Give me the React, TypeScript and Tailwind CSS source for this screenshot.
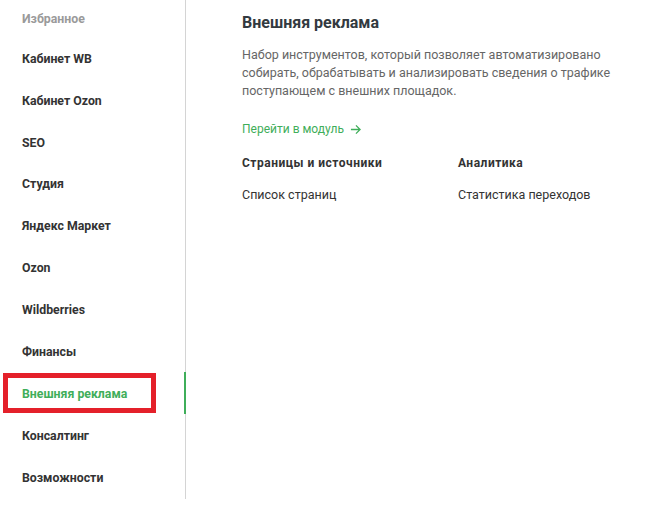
import React from "react";

const items = [
  "Кабинет WB",
  "Кабинет Ozon",
  "SEO",
  "Студия",
  "Яндекс Маркет",
  "Ozon",
  "Wildberries",
  "Финансы",
  "Внешняя реклама",
  "Консалтинг",
  "Возможности",
];

export default function App() {
  return (
    <div
      className="flex w-[655px] h-[514px] bg-white"
      style={{ fontFamily: "Roboto, 'Noto Sans', sans-serif" }}
    >
      <div className="w-[186px] shrink-0">
        <div className="border-r border-[#d4d4d4] flex flex-col">
          <div className="h-[38px] shrink-0 flex items-center pl-[22px] text-[12.3px] font-bold text-[#9a9a9a]">
            Избранное
          </div>
          {items.map((it) => {
            const active = it === "Внешняя реклама";
            return (
              <div
                key={it}
                className={
                  active
                    ? "relative h-[41.9px] shrink-0 flex items-center pl-[22px] text-[12.3px] font-bold text-[#3fae5a]"
                    : "relative h-[41.9px] shrink-0 flex items-center pl-[22px] text-[12.3px] font-bold text-[#333]"
                }
              >
                {it}
                {active && (
                  <>
                    <span className="absolute right-[-1px] top-[-1px] h-[42px] w-[2px] bg-[#3fae5a]" />
                    <span className="absolute left-[3px] top-[-0.5px] w-[153px] h-[40px] border-[5px] border-[#e4202a]" />
                  </>
                )}
              </div>
            );
          })}
        </div>
      </div>
      <div className="pl-[56px] pt-[13px] text-[#333]">
        <h1 className="text-[16px] font-bold text-[#333a40] leading-[20px]">
          Внешняя реклама
        </h1>
        <p className="mt-[13px] w-[385px] text-[12.5px] leading-[18px] text-[#666]">
          Набор инструментов, который позволяет автоматизировано собирать,
          обрабатывать и анализировать сведения о трафике поступающем с внешних
          площадок.
        </p>
        <div className="mt-[21px] flex items-center gap-[6px] text-[12px] text-[#3fae5a] leading-[16px]">
          Перейти в модуль
          <svg width="11" height="11" viewBox="0 0 12 12" fill="none" stroke="currentColor" strokeWidth="1.4">
            <path d="M1 6h10M6.5 1.5 11 6l-4.5 4.5" />
          </svg>
        </div>
        <div className="mt-[18px] flex">
          <div className="w-[216px]">
            <div className="text-[12px] font-bold tracking-[0.5px] leading-[16px] text-[#333]">
              Страницы и источники
            </div>
            <div className="mt-[16px] text-[12.5px] leading-[16px] text-[#333]">
              Список страниц
            </div>
          </div>
          <div>
            <div className="text-[12px] font-bold tracking-[0.5px] leading-[16px] text-[#333]">
              Аналитика
            </div>
            <div className="mt-[16px] text-[12.5px] leading-[16px] text-[#333]">
              Статистика переходов
            </div>
          </div>
        </div>
      </div>
    </div>
  );
}
